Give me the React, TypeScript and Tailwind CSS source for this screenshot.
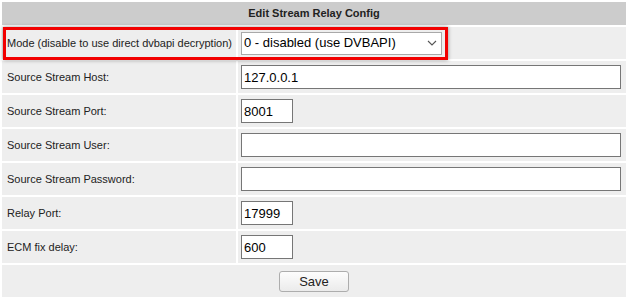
import React from "react";

const rows = [
  { label: "Source Stream Host:", value: "127.0.0.1", wide: true },
  { label: "Source Stream Port:", value: "8001" },
  { label: "Source Stream User:", value: "", wide: true },
  { label: "Source Stream Password:", value: "", wide: true },
  { label: "Relay Port:", value: "17999" },
  { label: "ECM fix delay:", value: "600" },
];

export default function App() {
  return (
    <div className="relative w-[628px] h-[299px] bg-white font-['Liberation_Sans',Arial,sans-serif] text-[#222]">
      <table className="w-full border-separate border-spacing-[2px]">
        <thead>
          <tr>
            <th colSpan={2} className="h-[23px] bg-[#cccccc] p-0 text-center text-[11px] font-bold text-[#222]">
              Edit Stream Relay Config
            </th>
          </tr>
        </thead>
        <tbody>
          <tr className="bg-[#eeeeee]">
            <td className="h-[32px] w-[234px] p-0 pl-[5px] text-[11px]">Mode (disable to use direct dvbapi decryption)</td>
            <td className="p-0 pl-[3px]">
              <div className="relative w-[201px]">
                <select
                  defaultValue="0"
                  className="block h-[23px] w-[201px] appearance-none border border-[#a9a9a9] bg-white pl-[2px] text-[13px] text-black outline-none"
                >
                  <option value="0">0 - disabled (use DVBAPI)</option>
                  <option value="1">1 - enabled</option>
                </select>
                <svg className="pointer-events-none absolute right-[5px] top-[8px]" width="10" height="6" viewBox="0 0 10 6">
                  <path d="M1 1 L5 5 L9 1" fill="none" stroke="#555" strokeWidth="1.1" />
                </svg>
              </div>
            </td>
          </tr>
          {rows.map((r) => (
            <tr key={r.label} className="bg-[#eeeeee]">
              <td className="h-[32px] w-[234px] p-0 pl-[5px] text-[11px]">{r.label}</td>
              <td className="p-0 pl-[3px]">
                <input
                  type="text"
                  defaultValue={r.value}
                  className={`block h-[24px] border border-[#767676] bg-white px-[2px] text-[13px] text-black outline-none ${r.wide ? "w-[380px]" : "w-[52px]"}`}
                />
              </td>
            </tr>
          ))}
          <tr className="bg-[#eeeeee]">
            <td colSpan={2} className="h-[32px] p-0 text-center">
              <button className="inline-block h-[21px] w-[70px] rounded-[3px] border border-[#adadad] bg-gradient-to-b from-[#fdfdfd] to-[#ebebeb] text-[13px] leading-none text-[#222]">
                Save
              </button>
            </td>
          </tr>
        </tbody>
      </table>
      <div className="pointer-events-none absolute left-[3px] top-[27px] h-[33px] w-[445px] border-[3px] border-[#f20000] shadow-[0_0_4px_rgba(0,0,0,0.4)]" />
    </div>
  );
}
